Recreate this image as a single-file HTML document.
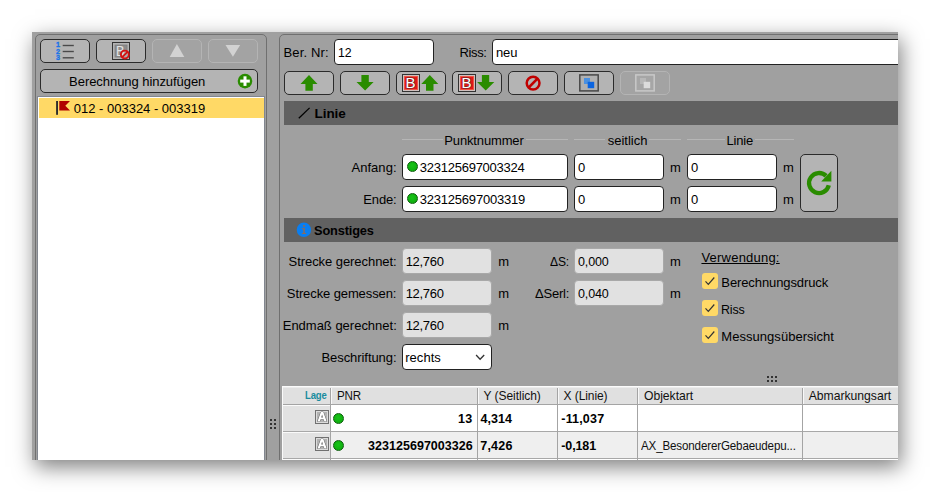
<!DOCTYPE html>
<html><head><meta charset="utf-8">
<style>
html,body{margin:0;padding:0;}
body{width:930px;height:492px;background:#fff;position:relative;overflow:hidden;font-family:"Liberation Sans",sans-serif;font-size:13px;color:#000;}
#shadow{position:absolute;left:32px;top:32px;width:866px;height:428px;box-shadow:3px 7px 20px rgba(0,0,0,0.5);}
#win{position:absolute;left:32px;top:32px;width:866px;height:428px;background:#a0a0a0;overflow:hidden;}
.a{position:absolute;box-sizing:border-box;}
.panel{position:absolute;border:1px solid #707070;border-radius:5px;box-sizing:border-box;}
.btn{position:absolute;box-sizing:border-box;border:1px solid #2b2b2b;border-radius:5px;background:#b4b4b4;height:24px;width:50px;}
.btn.dis{border-color:#b4b4b4;background:#a3a3a3;}
.inp{position:absolute;box-sizing:border-box;border:1px solid #222;border-radius:4px;background:#fff;height:26px;}
.ro{position:absolute;box-sizing:border-box;border:1px solid #a8a8a8;border-radius:4px;background:#e1e1e1;height:26px;}
.hdr{position:absolute;left:252px;width:620px;height:24px;background:#616161;}
.t{position:absolute;white-space:nowrap;}
svg{position:absolute;overflow:visible;}
.cb{position:absolute;width:16px;height:16px;border-radius:3px;background:#ffd966;}
.hl{position:absolute;height:1px;background:#b6b6b6;}
.dot{position:absolute;width:11px;height:11px;border-radius:50%;background:radial-gradient(circle at 45% 40%,#18c418 0%,#0fae0f 70%);border:1px solid #0b5e0b;box-sizing:border-box;}
</style></head><body>
<div id="shadow"></div>
<div id="win">
<div class="panel" style="left:3px;top:2px;width:232px;height:440px;"></div>
<div class="panel" style="left:247px;top:2px;width:640px;height:440px;"></div>

<!-- left panel buttons -->
<div class="btn" style="left:8px;top:7px;"></div>
<div class="btn" style="left:64px;top:7px;"></div>
<div class="btn dis" style="left:120px;top:7px;"></div>
<div class="btn dis" style="left:176px;top:7px;"></div>
<div class="btn" style="left:8px;top:37px;width:218px;"></div>

<!-- icon: numbered list -->
<svg style="left:0;top:0;" width="866" height="428" viewBox="32 32 866 428">
 <g stroke="#4a4a4a" stroke-width="1.4">
  <line x1="62.7" y1="45.5" x2="73.8" y2="45.5"/><line x1="62.7" y1="51.5" x2="73.8" y2="51.5"/><line x1="62.7" y1="57.8" x2="73.8" y2="57.8"/>
 </g>
 <g fill="#1a73e8" stroke="#1a73e8" stroke-width="0.35" font-family="Liberation Sans" font-weight="700" font-size="7.2px">
  <text x="56.1" y="47.3">1</text><text x="56.1" y="53.8">2</text><text x="56.1" y="60.2">3</text>
 </g>
 <!-- icon: B with no-sign -->
 <rect x="112.5" y="42.5" width="17" height="17" fill="#b4b4b4" stroke="#333" stroke-width="1"/>
 <rect x="114.6" y="44.6" width="12.9" height="12.9" fill="#808080"/>
 <rect x="115.6" y="45.6" width="10.9" height="10.9" fill="#8c8c8c"/>
 <text x="115.9" y="56" font-family="Liberation Sans" font-size="14px" fill="#e4e4e4" transform="translate(116 0) scale(0.9 1) translate(-116 0)">B</text>
 <circle cx="124.85" cy="54.55" r="3.95" fill="rgba(220,220,220,0.45)" stroke="#d41212" stroke-width="1.9"/>
 <line x1="122.2" y1="57.2" x2="127.5" y2="51.9" stroke="#d41212" stroke-width="1.9"/>
 <!-- disabled triangles -->
 <polygon points="176.9,44 184.3,57 169.7,57" fill="#d2d2d2"/>
 <polygon points="225.5,45 240.2,45 232.9,56.8" fill="#d2d2d2"/>
 <!-- plus -->
 <circle cx="245" cy="81.1" r="7.3" fill="#2a8c00"/>
 <rect x="240.2" y="79.6" width="9.6" height="3" fill="#fff"/><rect x="243.5" y="76.3" width="3" height="9.6" fill="#fff"/>
</svg>

<!-- list -->
<div class="a" style="left:5px;top:64px;width:228px;height:380px;background:#fff;border:1px solid #828790;"></div>
<div class="a" style="left:7px;top:66px;width:225px;height:20px;background:#ffd966;"></div>

<!-- right panel top row -->
<div class="inp" style="left:302px;top:7px;width:100px;"></div>
<div class="inp" style="left:460px;top:7px;width:420px;"></div>

<!-- toolbar -->
<div class="btn" style="left:252px;top:39px;"></div>
<div class="btn" style="left:308px;top:39px;"></div>
<div class="btn" style="left:364px;top:39px;"></div>
<div class="btn" style="left:420px;top:39px;"></div>
<div class="btn" style="left:476px;top:39px;"></div>
<div class="btn" style="left:532px;top:39px;"></div>
<div class="btn dis" style="left:588px;top:39px;"></div>

<div class="hdr" style="top:69px;"></div>
<div class="hdr" style="top:186px;"></div>

<!-- group lines -->
<div class="hl" style="left:370px;top:107px;width:41px;"></div><div class="hl" style="left:494px;top:107px;width:42px;"></div>
<div class="hl" style="left:542px;top:107px;width:31px;"></div><div class="hl" style="left:617px;top:107px;width:32px;"></div>
<div class="hl" style="left:655px;top:107px;width:38px;"></div><div class="hl" style="left:723px;top:107px;width:39px;"></div>

<div class="inp" style="left:370px;top:122px;width:166px;"></div>
<div class="inp" style="left:542px;top:122px;width:90px;"></div>
<div class="inp" style="left:655px;top:122px;width:90px;"></div>
<div class="inp" style="left:370px;top:154px;width:166px;"></div>
<div class="inp" style="left:542px;top:154px;width:90px;"></div>
<div class="inp" style="left:655px;top:154px;width:90px;"></div>
<div class="btn" style="left:768px;top:122px;width:38px;height:58px;"></div>
<div class="dot" style="left:375px;top:129px;"></div>
<div class="dot" style="left:375px;top:161px;"></div>

<div class="ro" style="left:370px;top:216px;width:90px;"></div>
<div class="ro" style="left:370px;top:248px;width:90px;"></div>
<div class="ro" style="left:370px;top:280px;width:90px;"></div>
<div class="inp" style="left:370px;top:312px;width:90px;"></div>
<div class="ro" style="left:542px;top:216px;width:90px;"></div>
<div class="ro" style="left:542px;top:248px;width:90px;"></div>

<div class="cb" style="left:670px;top:241px;"></div>
<div class="cb" style="left:670px;top:268px;"></div>
<div class="cb" style="left:670px;top:295px;"></div>

<!-- table -->
<div class="a" style="left:250px;top:354px;width:620px;height:18px;background:#e0e0e0;border-top:1px solid #fbfbfb;"></div>
<div class="a" style="left:250px;top:355px;width:620px;height:1px;background:#ececec;"></div>
<div class="a" style="left:250px;top:372px;width:620px;height:1px;background:#a4a4a4;"></div>
<div class="a" style="left:250px;top:373px;width:620px;height:26px;background:#fff;"></div>
<div class="a" style="left:250px;top:399px;width:620px;height:1px;background:#a8a8a8;"></div>
<div class="a" style="left:250px;top:400px;width:620px;height:26px;background:#efefef;"></div>
<div class="a" style="left:250px;top:426px;width:620px;height:1px;background:#a8a8a8;"></div>
<div class="a" style="left:250px;top:427px;width:620px;height:1px;background:#fff;"></div>
<div class="a" style="left:250px;top:373px;width:48px;height:26px;background:#e2e2e2;border-top:1px solid #fafafa;"></div>
<div class="a" style="left:250px;top:400px;width:48px;height:26px;background:#e2e2e2;border-top:1px solid #fafafa;"></div>
<div class="a" style="left:250px;top:427px;width:48px;height:1px;background:#fafafa;"></div>
<div class="a" style="left:298px;top:356px;width:1px;height:72px;background:#a4a4a4;"></div>
<div class="a" style="left:299px;top:356px;width:1px;height:16px;background:#f8f8f8;"></div>
<div class="a" style="left:445px;top:356px;width:1px;height:72px;background:#a4a4a4;"></div>
<div class="a" style="left:446px;top:356px;width:1px;height:16px;background:#f8f8f8;"></div>
<div class="a" style="left:525px;top:356px;width:1px;height:72px;background:#a4a4a4;"></div>
<div class="a" style="left:526px;top:356px;width:1px;height:16px;background:#f8f8f8;"></div>
<div class="a" style="left:605px;top:356px;width:1px;height:72px;background:#a4a4a4;"></div>
<div class="a" style="left:606px;top:356px;width:1px;height:16px;background:#f8f8f8;"></div>
<div class="a" style="left:770px;top:356px;width:1px;height:72px;background:#a4a4a4;"></div>
<div class="a" style="left:771px;top:356px;width:1px;height:16px;background:#f8f8f8;"></div>
<div class="a" style="left:250px;top:354px;width:1px;height:74px;background:#fafafa;"></div>
<div class="dot" style="left:301px;top:381px;"></div>
<div class="dot" style="left:301px;top:408px;"></div>

<svg style="left:0;top:0;" width="866" height="428" viewBox="32 32 866 428">
 <!-- flag -->
 <rect x="56.1" y="101" width="1.9" height="13.8" fill="#2d2d2d"/>
 <polygon points="59.3,101 70,101 65.3,105.7 70,110.4 59.3,110.4" fill="#b00000"/>
 <!-- toolbar arrows -->
 <g fill="#2a8c00">
  <polygon points="309,75 317.5,84 312.8,84 312.8,90.8 305.4,90.8 305.4,84 300.5,84"/>
  <polygon points="361.4,75 368.8,75 368.8,82 373.6,82 365.1,90.6 356.5,82 361.4,82"/>
  <polygon points="429.8,75 438.3,84 433.5,84 433.5,90.8 426,90.8 426,84 421.3,84"/>
  <polygon points="481.9,75 489.2,75 489.2,82 494.3,82 485.7,90.6 477.1,82 481.9,82"/>
 </g>
 <!-- B boxes -->
 <g id="bb">
  <rect x="402.5" y="74.5" width="17" height="17" fill="#cccccc" stroke="#333" stroke-width="1"/>
  <rect x="403.9" y="75.9" width="14.2" height="14.2" fill="#f05a48"/>
  <rect x="404.9" y="76.9" width="12.2" height="12.2" fill="#e01818"/>
  <text x="405.4" y="88.4" font-family="Liberation Sans" font-size="15px" fill="#fff" stroke="#503030" stroke-width="0.9" paint-order="stroke">B</text>
 </g>
 <g>
  <rect x="458.5" y="74.5" width="17" height="17" fill="#cccccc" stroke="#333" stroke-width="1"/>
  <rect x="459.9" y="75.9" width="14.2" height="14.2" fill="#f05a48"/>
  <rect x="460.9" y="76.9" width="12.2" height="12.2" fill="#e01818"/>
  <text x="461.4" y="88.4" font-family="Liberation Sans" font-size="15px" fill="#fff" stroke="#503030" stroke-width="0.9" paint-order="stroke">B</text>
 </g>
 <!-- no sign -->
 <circle cx="533.1" cy="83.1" r="6.4" fill="none" stroke="#c00000" stroke-width="2.5"/>
 <line x1="528.7" y1="87.5" x2="537.5" y2="78.7" stroke="#c00000" stroke-width="2.5"/>
 <!-- copy icons -->
 <rect x="579.8" y="74.9" width="18.4" height="16" fill="#b0b0b0" stroke="#484848" stroke-width="1.5"/>
 <rect x="584" y="78" width="6" height="6" fill="#4a90e0"/>
 <rect x="587.7" y="81.8" width="6.5" height="6.4" fill="#0a64e0"/>
 <rect x="635.8" y="74.9" width="18.4" height="16" fill="#a6a6a6" stroke="#c8c8c8" stroke-width="1.5"/>
 <rect x="640" y="78" width="6" height="6" fill="#b8b8b8"/>
 <rect x="643.7" y="81.8" width="6.5" height="6.4" fill="#dcdcdc"/>
 <!-- header icons -->
 <line x1="298.8" y1="118.2" x2="309.6" y2="107.9" stroke="#000" stroke-width="1.3"/>
 <circle cx="303.9" cy="229.8" r="7.2" fill="#0a7ef0"/>
 <g fill="#8a6c5e"><rect x="303.1" y="225" width="1.8" height="1.8"/><rect x="303.3" y="228" width="1.5" height="5.4"/><rect x="302.1" y="228" width="1.4" height="1"/><rect x="302" y="233" width="4.1" height="1"/></g>
 <!-- refresh -->
 <path d="M 828.8 185.3 A 10 10 0 1 1 826.1 175.9" fill="none" stroke="#2a8c00" stroke-width="4.3"/>
 <polygon points="831.4,170.8 831.4,181.5 821.2,181.5" fill="#2a8c00"/>
 <!-- combobox chevron -->
 <polyline points="476.1,355 480.1,359.3 484.2,355" fill="none" stroke="#333" stroke-width="1.3"/>
 <!-- check marks -->
 <g fill="none" stroke="#333" stroke-width="1.2">
  <polyline points="705.5,281.3 708.3,284.3 714.3,277.5"/>
  <polyline points="705.5,308.3 708.3,311.3 714.3,304.5"/>
  <polyline points="705.5,335.3 708.3,338.3 714.3,331.5"/>
 </g>
 <!-- grips -->
 <g fill="#333">
  <rect x="767" y="376" width="2" height="2"/><rect x="771" y="376" width="2" height="2"/><rect x="775" y="376" width="2" height="2"/>
  <rect x="767" y="380" width="2" height="2"/><rect x="771" y="380" width="2" height="2"/><rect x="775" y="380" width="2" height="2"/>
  <rect x="270" y="419" width="2" height="2"/><rect x="274" y="419" width="2" height="2"/>
  <rect x="270" y="423" width="2" height="2"/><rect x="274" y="423" width="2" height="2"/>
  <rect x="270" y="427" width="2" height="2"/><rect x="274" y="427" width="2" height="2"/>
 </g>
 <!-- A icons -->
 <g>
  <rect x="315.5" y="410.5" width="13" height="13" fill="#dcdcdc" stroke="#707070"/>
  <rect x="317" y="412" width="10" height="10" fill="#b2b2b2"/>
  <path d="M317.5 421.4 L320.9 412.1 L323.3 412.1 L326.7 421.4 L324.4 421.4 L323.7 419.3 L320.5 419.3 L319.8 421.4 Z M321.1 417.6 L323.1 417.6 L322.1 414.4 Z" fill="#fff" fill-rule="evenodd" stroke="#5c5c5c" stroke-width="0.9" stroke-linejoin="miter" paint-order="stroke"/>
  <rect x="315.5" y="437.5" width="13" height="13" fill="#dcdcdc" stroke="#707070"/>
  <rect x="317" y="439" width="10" height="10" fill="#b2b2b2"/>
  <path d="M317.5 448.4 L320.9 439.1 L323.3 439.1 L326.7 448.4 L324.4 448.4 L323.7 446.3 L320.5 446.3 L319.8 448.4 Z M321.1 444.6 L323.1 444.6 L322.1 441.4 Z" fill="#fff" fill-rule="evenodd" stroke="#5c5c5c" stroke-width="0.9" stroke-linejoin="miter" paint-order="stroke"/>
 </g>
</svg>
<div class="t" style="left:37.12px;top:43px;font-size:13px;line-height:13px;letter-spacing:-0.055px;color:#000;">Berechnung hinzufügen</div>
<div class="t" style="left:41.82px;top:70px;font-size:13px;line-height:13px;letter-spacing:-0.008px;color:#000;">012 - 003324 - 003319</div>
<div class="t" style="left:251.42px;top:14px;font-size:13px;line-height:13px;letter-spacing:0.165px;color:#000;">Ber. Nr:</div>
<div class="t" style="left:306.24px;top:14px;font-size:13px;line-height:13px;letter-spacing:-0.150px;color:#000;transform:scaleX(0.9466);transform-origin:0 0;">12</div>
<div class="t" style="left:427.42px;top:14px;font-size:13px;line-height:13px;letter-spacing:-0.330px;color:#000;">Riss:</div>
<div class="t" style="left:463.89px;top:14px;font-size:13px;line-height:13px;letter-spacing:-0.103px;color:#000;">neu</div>
<div class="t" style="left:282.61px;top:75px;font-size:13.5px;line-height:13px;letter-spacing:-0.105px;color:#000;font-weight:700;">Linie</div>
<div class="t" style="left:412.32px;top:102px;font-size:13px;line-height:13px;letter-spacing:-0.147px;color:#000;">Punktnummer</div>
<div class="t" style="left:575.77px;top:102px;font-size:13px;line-height:13px;letter-spacing:-0.010px;color:#000;">seitlich</div>
<div class="t" style="left:694.52px;top:102px;font-size:13px;line-height:13px;letter-spacing:-0.194px;color:#000;">Linie</div>
<div class="t" style="left:319.47px;top:129px;font-size:13px;line-height:13px;letter-spacing:0.037px;color:#000;">Anfang:</div>
<div class="t" style="left:387.86px;top:129px;font-size:13px;line-height:13px;letter-spacing:-0.258px;color:#000;">323125697003324</div>
<div class="t" style="left:546.00px;top:129px;font-size:13px;line-height:13px;letter-spacing:0.000px;color:#000;">0</div>
<div class="t" style="left:638.04px;top:129px;font-size:13px;line-height:13px;letter-spacing:0.000px;color:#000;">m</div>
<div class="t" style="left:659.00px;top:129px;font-size:13px;line-height:13px;letter-spacing:0.000px;color:#000;">0</div>
<div class="t" style="left:751.04px;top:129px;font-size:13px;line-height:13px;letter-spacing:0.000px;color:#000;">m</div>
<div class="t" style="left:331.32px;top:161px;font-size:13px;line-height:13px;letter-spacing:-0.155px;color:#000;">Ende:</div>
<div class="t" style="left:387.86px;top:161px;font-size:13px;line-height:13px;letter-spacing:-0.228px;color:#000;">323125697003319</div>
<div class="t" style="left:546.00px;top:161px;font-size:13px;line-height:13px;letter-spacing:0.000px;color:#000;">0</div>
<div class="t" style="left:638.04px;top:161px;font-size:13px;line-height:13px;letter-spacing:0.000px;color:#000;">m</div>
<div class="t" style="left:659.00px;top:161px;font-size:13px;line-height:13px;letter-spacing:0.000px;color:#000;">0</div>
<div class="t" style="left:751.04px;top:161px;font-size:13px;line-height:13px;letter-spacing:0.000px;color:#000;">m</div>
<div class="t" style="left:282.40px;top:192px;font-size:13.5px;line-height:13px;letter-spacing:-0.150px;color:#000;font-weight:700;transform:scaleX(0.9464);transform-origin:0 0;">Sonstiges</div>
<div class="t" style="left:256.53px;top:223px;font-size:13px;line-height:13px;letter-spacing:-0.057px;color:#000;">Strecke gerechnet:</div>
<div class="t" style="left:373.68px;top:223px;font-size:13px;line-height:13px;letter-spacing:-0.301px;color:#000;">12,760</div>
<div class="t" style="left:466.14px;top:223px;font-size:13px;line-height:13px;letter-spacing:0.000px;color:#000;">m</div>
<div class="t" style="left:254.83px;top:255px;font-size:13px;line-height:13px;letter-spacing:-0.108px;color:#000;">Strecke gemessen:</div>
<div class="t" style="left:373.68px;top:255px;font-size:13px;line-height:13px;letter-spacing:-0.301px;color:#000;">12,760</div>
<div class="t" style="left:466.14px;top:255px;font-size:13px;line-height:13px;letter-spacing:0.000px;color:#000;">m</div>
<div class="t" style="left:250.72px;top:287px;font-size:13px;line-height:13px;letter-spacing:-0.009px;color:#000;">Endmaß gerechnet:</div>
<div class="t" style="left:373.68px;top:287px;font-size:13px;line-height:13px;letter-spacing:-0.301px;color:#000;">12,760</div>
<div class="t" style="left:466.14px;top:287px;font-size:13px;line-height:13px;letter-spacing:0.000px;color:#000;">m</div>
<div class="t" style="left:289.42px;top:319px;font-size:13px;line-height:13px;letter-spacing:-0.060px;color:#000;">Beschriftung:</div>
<div class="t" style="left:373.18px;top:319px;font-size:13px;line-height:13px;letter-spacing:0.055px;color:#000;">rechts</div>
<div class="t" style="left:518.19px;top:223px;font-size:13px;line-height:13px;letter-spacing:-0.150px;color:#000;transform:scaleX(0.9279);transform-origin:0 0;">ΔS:</div>
<div class="t" style="left:545.84px;top:223px;font-size:13px;line-height:13px;letter-spacing:-0.150px;color:#000;transform:scaleX(0.9631);transform-origin:0 0;">0,000</div>
<div class="t" style="left:638.04px;top:223px;font-size:13px;line-height:13px;letter-spacing:0.000px;color:#000;">m</div>
<div class="t" style="left:503.06px;top:255px;font-size:13px;line-height:13px;letter-spacing:-0.231px;color:#000;">ΔSerl:</div>
<div class="t" style="left:545.84px;top:255px;font-size:13px;line-height:13px;letter-spacing:-0.150px;color:#000;transform:scaleX(0.9631);transform-origin:0 0;">0,040</div>
<div class="t" style="left:638.04px;top:255px;font-size:13px;line-height:13px;letter-spacing:0.000px;color:#000;">m</div>
<div class="t" style="left:669.45px;top:219px;font-size:13px;line-height:13px;letter-spacing:0.215px;color:#000;text-decoration:underline;text-underline-offset:1px;">Verwendung:</div>
<div class="t" style="left:689.32px;top:244px;font-size:13px;line-height:13px;letter-spacing:-0.100px;color:#000;">Berechnungsdruck</div>
<div class="t" style="left:689.37px;top:271px;font-size:13px;line-height:13px;letter-spacing:-0.150px;color:#000;transform:scaleX(0.9566);transform-origin:0 0;">Riss</div>
<div class="t" style="left:689.32px;top:298px;font-size:13px;line-height:13px;letter-spacing:0.040px;color:#000;">Messungsübersicht</div>
<div class="t" style="left:272.75px;top:358px;font-size:10px;line-height:11px;letter-spacing:-0.150px;color:#1a8c9e;font-weight:700;transform:scaleX(0.9517);transform-origin:0 0;">Lage</div>
<div class="t" style="left:304.63px;top:357px;font-size:12.5px;line-height:14px;letter-spacing:-0.150px;color:#111;transform:scaleX(0.9277);transform-origin:0 0;">PNR</div>
<div class="t" style="left:451.60px;top:357px;font-size:12px;line-height:14px;letter-spacing:-0.053px;color:#111;">Y (Seitlich)</div>
<div class="t" style="left:531.58px;top:357px;font-size:12px;line-height:14px;letter-spacing:-0.082px;color:#111;">X (Linie)</div>
<div class="t" style="left:611.97px;top:357px;font-size:12.2px;line-height:14px;letter-spacing:-0.036px;color:#111;">Objektart</div>
<div class="t" style="left:776.67px;top:357px;font-size:12.2px;line-height:14px;letter-spacing:-0.016px;color:#111;">Abmarkungsart</div>
<div class="t" style="left:425.92px;top:380px;font-size:12.5px;line-height:14px;letter-spacing:0.450px;color:#000;font-weight:700;">13</div>
<div class="t" style="left:448.53px;top:380px;font-size:12.5px;line-height:14px;letter-spacing:0.023px;color:#000;font-weight:700;">4,314</div>
<div class="t" style="left:529.29px;top:380px;font-size:12.5px;line-height:14px;letter-spacing:0.186px;color:#000;font-weight:700;">-11,037</div>
<div class="t" style="left:336.05px;top:407px;font-size:12.5px;line-height:14px;letter-spacing:0.029px;color:#000;font-weight:700;">323125697003326</div>
<div class="t" style="left:448.23px;top:407px;font-size:12.5px;line-height:14px;letter-spacing:0.231px;color:#000;font-weight:700;">7,426</div>
<div class="t" style="left:529.29px;top:407px;font-size:12.5px;line-height:14px;letter-spacing:-0.128px;color:#000;font-weight:700;">-0,181</div>
<div class="t" style="left:609.20px;top:407px;font-size:12.5px;line-height:14px;letter-spacing:-0.150px;color:#111;transform:scaleX(0.9263);transform-origin:0 0;">AX_BesondererGebaeudepu...</div>
</div>
</body></html>
